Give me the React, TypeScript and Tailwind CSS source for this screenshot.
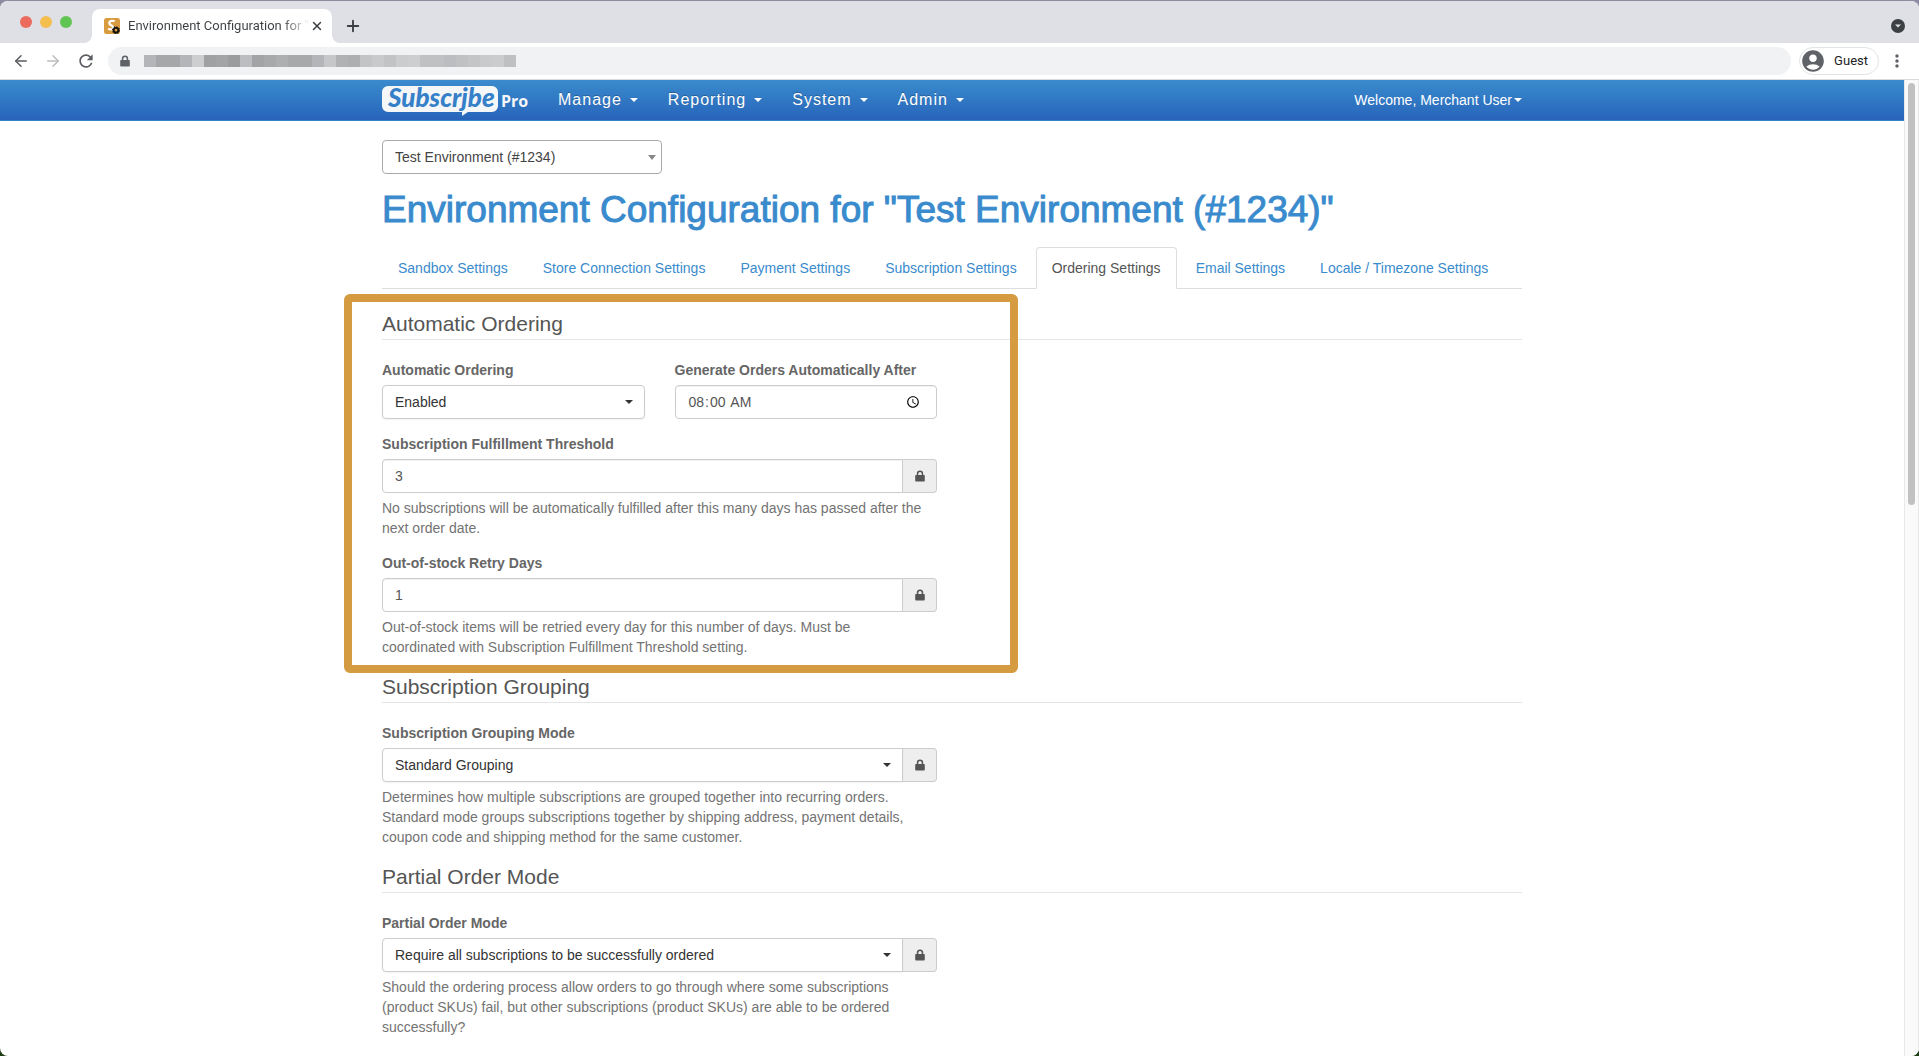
import { useState } from 'react'
import type { ReactNode } from 'react'
import { ArrowLeft, ArrowRight, Plus, X } from 'lucide-react'
import { MdMoreVert, MdRefresh, MdAccountCircle } from 'react-icons/md'

const menus = ['Manage', 'Reporting', 'System', 'Admin']

const tabs = [
  'Sandbox Settings',
  'Store Connection Settings',
  'Payment Settings',
  'Subscription Settings',
  'Ordering Settings',
  'Email Settings',
  'Locale / Timezone Settings'
]

// redacted address, one entry per block
const addressBlocks = [
  'bg-[#b4b5b8]', 'bg-[#a6a7a9]', 'bg-[#a6a7a9]', 'bg-[#b4b5b8]', 'bg-[#cdced0]', 'bg-[#a0a1a3]',
  'bg-[#a3a4a6]', 'bg-[#9b9c9e]', 'bg-[#bcbdc0]', 'bg-[#a3a4a6]', 'bg-[#a8a9ab]', 'bg-[#aeafb1]',
  'bg-[#a8a9ab]', 'bg-[#a8a9ab]', 'bg-[#b4b5b8]', 'bg-[#c6c7c9]', 'bg-[#b1b2b4]', 'bg-[#aeafb1]',
  'bg-[#c3c4c6]', 'bg-[#c9cacc]', 'bg-[#c2c3c5]', 'bg-[#cbccce]', 'bg-[#cdced0]', 'bg-[#c0c1c3]',
  'bg-[#c0c1c3]', 'bg-[#bcbdc0]', 'bg-[#c0c1c3]', 'bg-[#c4c5c7]', 'bg-[#c9cacc]', 'bg-[#cbccce]',
  'bg-[#bfc0c2]'
]

function Caret({ className = 'w-2' }: { className?: string }) {
  return (
    <svg viewBox="0 0 8 4" className={`h-1 fill-current ${className}`} aria-hidden="true">
      <path d="M0 0h8L4 4z" />
    </svg>
  )
}

function Lock() {
  return (
    <svg viewBox="0 0 10 12" className="h-3 w-2.5 fill-current" aria-hidden="true">
      <path d="M1 5h.8V3.700a3.200 3.200 0 0 1 6.400 0V5H9a.8.8 0 0 1 .8.8v5a.8.8 0 0 1-.8.8H1a.8.8 0 0 1-.8-.8v-5A.8.8 0 0 1 1 5zm2.300 0h3.400V3.700a1.700 1.700 0 0 0-3.400 0z" />
    </svg>
  )
}

function Favicon() {
  return (
    <svg viewBox="0 0 16 16" className="size-4 shrink-0" aria-hidden="true">
      <rect width="16" height="16" rx="2.5" fill="#d89b3f" />
      <path d="M10.6 3.4C9.2 2.4 5.4 2.3 5.3 5c-.1 2.600 4.300 2.500 4.100 4.800-.2 2-3.600 2-5.300.9" fill="none" stroke="#fff" strokeWidth="2.200" />
      <circle cx="12" cy="12.200" r="2.300" fill="none" stroke="#111" strokeWidth="1.800" />
      <circle cx="12" cy="12.200" r="3.400" fill="none" stroke="#111" strokeWidth="1.200" strokeDasharray="1.300 1.370" />
    </svg>
  )
}

function Logo() {
  return (
    <svg viewBox="0 0 148 32" className="h-8 w-[148px] overflow-visible" role="img" aria-label="Subscribe Pro">
      <path d="M6 2h104a6 6 0 0 1 6 6v14a6 6 0 0 1-6 6H86l-6 4v-4H6a6 6 0 0 1-6-6V8a6 6 0 0 1 6-6z" fill="#f5f6f8" />
      <text x="6" y="23" fill="#3580c8" className="font-[Lato] text-[26px] font-black italic">Subscrjbe</text>
      <text x="119" y="23" fill="#f5f6f8" className="font-['Open_Sans'] text-[16px] font-bold">Pro</text>
    </svg>
  )
}

function BrowserChrome() {
  return (
    <header className="font-[Roboto]">
      <div className="flex h-[42px] items-end bg-[#dfe0e6]">
        <div className="flex h-[34px] w-[92px] items-start gap-2 pt-[7px] pl-5">
          <span className="size-3 rounded-full bg-[#ed6a5e]" />
          <span className="size-3 rounded-full bg-[#f5bf4f]" />
          <span className="size-3 rounded-full bg-[#61c554]" />
        </div>
        <div className="relative flex h-[34px] w-[240px] items-center rounded-t-lg bg-white pr-2 pl-3">
          <svg viewBox="0 0 8 8" className="absolute bottom-0 -left-2 size-2 fill-white" aria-hidden="true">
            <path d="M8 0v8H0a8 8 0 0 0 8-8z" />
          </svg>
          <svg viewBox="0 0 8 8" className="absolute -right-2 bottom-0 size-2 fill-white" aria-hidden="true">
            <path d="M0 0v8h8a8 8 0 0 1-8-8z" />
          </svg>
          <Favicon />
          <span className="ml-2 flex-1 bg-gradient-to-r from-[#3c4043] from-85% to-transparent bg-clip-text text-[13px] whitespace-nowrap text-transparent">
            Environment Configuration for "
          </span>
          <button aria-label="Close tab" className="text-[#3c4043]">
            <X size={14} strokeWidth={2.5} />
          </button>
        </div>
        <button aria-label="New tab" className="mb-2 ml-3 text-[#3c4043]">
          <Plus size={18} strokeWidth={2.5} />
        </button>
        <button aria-label="Search tabs" className="mr-3.5 mb-2.5 ml-auto grid size-3.5 place-items-center rounded-full bg-[#3c4043] text-[#dfe0e6]">
          <Caret className="w-1.5" />
        </button>
      </div>
      <div className="flex h-[37px] items-center border-b border-[#dadbdd] bg-white pr-3 pl-3">
        <button aria-label="Back" className="text-[#5a5d61]"><ArrowLeft size={18} /></button>
        <button aria-label="Forward" className="ml-3.5 text-[#babcbe]"><ArrowRight size={18} /></button>
        <button aria-label="Reload" className="ml-3.5 text-[#5a5d61]"><MdRefresh size={20} /></button>
        <div className="ml-3 flex h-7 flex-1 items-center rounded-full bg-[#f1f2f4] pl-3 text-[#5f6368]">
          <Lock />
          <div className="ml-3.5 flex">
            {addressBlocks.map((color, i) => (
              <span key={i} className={`h-3 w-3 ${color}`} />
            ))}
          </div>
        </div>
        <button className="ml-2 flex h-7 items-center gap-2 rounded-full border border-[#e3e4e6] pr-2.5 text-[13px] text-[#202124]">
          <MdAccountCircle size={26} className="text-[#5f6368]" />
          Guest
        </button>
        <button aria-label="Browser menu" className="ml-2 text-[#5f6368]"><MdMoreVert size={20} /></button>
      </div>
    </header>
  )
}

function Navbar() {
  return (
    <nav className="border-b border-[#2f85c7] bg-gradient-to-b from-[#3a8bcd] to-[#2864ba] text-white">
      <div className="mx-auto flex h-10 max-w-[1140px] items-center">
        <a href="#home"><Logo /></a>
        <div className="ml-[13px] flex">
          {menus.map(menu => (
            <button key={menu} className="flex items-center gap-2 px-[15px] text-[16px] tracking-[1px] text-shadow-[0_-1px_0_rgb(0_0_0/25%)]">
              {menu}
              <Caret />
            </button>
          ))}
        </div>
        <button className="ml-auto flex items-center gap-0.5 text-sm">
          Welcome, Merchant User
          <Caret />
        </button>
      </div>
    </nav>
  )
}

function Section({ title, children }: { title: string; children: ReactNode }) {
  return (
    <fieldset>
      <legend className="mb-5 w-full border-b border-[#e5e5e5] text-[21px] leading-[30px] text-[#555]">{title}</legend>
      <div className="grid grid-cols-2 gap-[30px]">
        <div>{children}</div>
      </div>
    </fieldset>
  )
}

interface FieldProps {
  id: string
  label: string
  help?: string
  locked?: boolean
  children: ReactNode
}

function Field({ id, label, help, locked, children }: FieldProps) {
  return (
    <div className="mb-[15px]">
      <label htmlFor={id} className="mb-[5px] block font-bold text-[#666]">{label}</label>
      <div className="flex">
        {children}
        {locked && (
          <span className="grid w-[34px] shrink-0 place-items-center rounded-r border border-l-0 border-[#ccc] bg-[#eee] text-[#555]">
            <Lock />
          </span>
        )}
      </div>
      {help && <p className="mt-[5px] pr-3 text-[#737373]">{help}</p>}
    </div>
  )
}

const control = 'h-[34px] w-full border border-[#ccc] bg-white px-3 text-sm'

function Select({ id, value, joined }: { id: string; value: string; joined?: boolean }) {
  return (
    <div className="relative flex-1">
      <select id={id} className={`${control} appearance-none text-[#333] shadow-xs ${joined ? 'rounded-l' : 'rounded'}`}>
        <option>{value}</option>
      </select>
      <Caret className="pointer-events-none absolute top-[15px] right-3 w-2 text-[#333]" />
    </div>
  )
}

function NumberInput({ id, initial }: { id: string; initial: string }) {
  const [value, setValue] = useState(initial)
  return (
    <input
      id={id}
      value={value}
      onChange={e => setValue(e.target.value)}
      className={`${control} rounded-l text-[#555] inset-shadow-2xs`}
    />
  )
}

export default function App() {
  const [activeTab, setActiveTab] = useState('Ordering Settings')
  const [time, setTime] = useState('08:00')

  return (
    <div className="h-screen overflow-hidden bg-gradient-to-b from-[#8f8ba3] to-[#1f3d14] pt-px">
      <div className="flex h-full flex-col overflow-hidden rounded-lg bg-white">
        <BrowserChrome />
        <div className="flex min-h-0 flex-1">
          <div className="flex-1 overflow-hidden font-['Liberation_Sans',sans-serif] text-sm leading-5">
            <Navbar />
            <main className="mx-auto max-w-[1140px] pt-[19px]">
              <div className="relative w-[280px]">
                <select aria-label="Environment" className="h-[34px] w-full appearance-none rounded border border-[#aaa] bg-white px-3 text-sm text-[#444]">
                  <option>Test Environment (#1234)</option>
                </select>
                <svg viewBox="0 0 8 5" className="pointer-events-none absolute top-[15px] right-[6px] h-[5px] w-2 fill-[#888]" aria-hidden="true">
                  <path d="M0 0h8L4 5z" />
                </svg>
              </div>

              <h1 className="mt-4 text-[37px] leading-10 text-[#3a8bcd] [-webkit-text-stroke:1px_#3a8bcd]">
                Environment Configuration for "Test Environment (#1234)"
              </h1>

              <div className="mt-[17px] flex gap-[3px] border-b border-[#ddd]">
                {tabs.map(tab => (
                  <a
                    key={tab}
                    href="#settings"
                    onClick={() => setActiveTab(tab)}
                    className={`-mb-px rounded-t border px-[15px] py-2.5 ${
                      tab === activeTab ? 'border-[#ddd] border-b-white bg-white text-[#555]' : 'border-transparent text-[#3a8bcd]'
                    }`}
                  >
                    {tab}
                  </a>
                ))}
              </div>

              <div className="relative mt-5">
                {/* highlight around the automatic ordering block */}
                <div className="pointer-events-none absolute -top-[15px] -left-[38px] h-[379px] w-[674px] rounded-md border-8 border-[#d49b41]" />
                <Section title="Automatic Ordering">
                  <div className="grid grid-cols-2 gap-[30px]">
                    <Field id="automatic" label="Automatic Ordering">
                      <Select id="automatic" value="Enabled" />
                    </Field>
                    <Field id="after" label="Generate Orders Automatically After">
                      <input
                        id="after"
                        type="time"
                        value={time}
                        onChange={e => setTime(e.target.value)}
                        className={`${control} rounded text-[#555] inset-shadow-2xs`}
                      />
                    </Field>
                  </div>
                  <Field
                    id="threshold"
                    label="Subscription Fulfillment Threshold"
                    help="No subscriptions will be automatically fulfilled after this many days has passed after the next order date."
                    locked
                  >
                    <NumberInput id="threshold" initial="3" />
                  </Field>
                  <Field
                    id="retry"
                    label="Out-of-stock Retry Days"
                    help="Out-of-stock items will be retried every day for this number of days. Must be coordinated with Subscription Fulfillment Threshold setting."
                    locked
                  >
                    <NumberInput id="retry" initial="1" />
                  </Field>
                </Section>
              </div>

              <Section title="Subscription Grouping">
                <Field
                  id="grouping"
                  label="Subscription Grouping Mode"
                  help="Determines how multiple subscriptions are grouped together into recurring orders. Standard mode groups subscriptions together by shipping address, payment details, coupon code and shipping method for the same customer."
                  locked
                >
                  <Select id="grouping" value="Standard Grouping" joined />
                </Field>
              </Section>

              <Section title="Partial Order Mode">
                <Field
                  id="partial"
                  label="Partial Order Mode"
                  help="Should the ordering process allow orders to go through where some subscriptions (product SKUs) fail, but other subscriptions (product SKUs) are able to be ordered successfully?"
                  locked
                >
                  <Select id="partial" value="Require all subscriptions to be successfully ordered" joined />
                </Field>
              </Section>
            </main>
          </div>
          <div className="w-[15px] border-x border-[#e8e8e8] bg-[#fafafa] px-[3px] pt-[3px]">
            <div className="h-[422px] rounded-full bg-[#c1c1c1]" />
          </div>
        </div>
      </div>
    </div>
  )
}
